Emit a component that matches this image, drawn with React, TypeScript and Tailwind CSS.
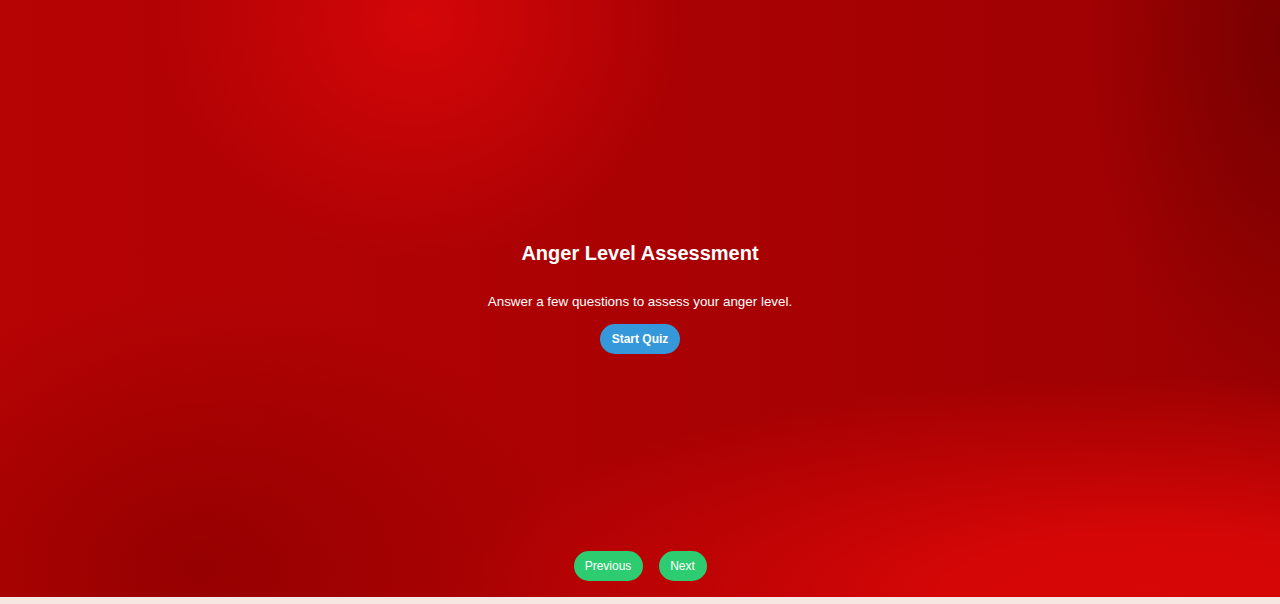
export default function App() {
  return (
    <div className="flex h-[604px] w-[1280px] flex-col overflow-hidden font-['Liberation_Sans',Arial,sans-serif]">
      <div className="relative flex h-[597px] flex-col items-center bg-[#a80204] bg-[radial-gradient(ellipse_260px_240px_at_420px_20px,#d40608_0%,rgba(212,6,8,0)_100%),radial-gradient(ellipse_700px_220px_at_1150px_597px,#d80606_0%,#d40606_30%,rgba(216,6,6,0)_100%),radial-gradient(ellipse_200px_380px_at_1290px_40px,#760000_0%,rgba(118,0,0,0)_100%),radial-gradient(ellipse_380px_280px_at_200px_570px,#960000_0%,rgba(150,0,0,0)_100%),linear-gradient(90deg,#b60304_0%,#ae0204_35%,#a60103_65%,#9c0102_100%)]">
        <div className="mt-[241px] flex flex-col items-center text-white">
          <h1 className="text-[20px] font-bold leading-6">Anger Level Assessment</h1>
          <p className="mt-[27px] text-[13.4px] leading-5">Answer a few questions to assess your anger level.</p>
          <button className="mt-[12px] h-[30px] w-[80px] rounded-full bg-[#3498db] text-[12px] font-bold text-white">
            Start Quiz
          </button>
        </div>
        <div className="mt-auto mb-4 flex gap-4">
          <button className="h-[30px] w-[69px] rounded-full bg-[#2ecc71] text-[12px] text-white">Previous</button>
          <button className="h-[30px] w-[48px] rounded-full bg-[#2ecc71] text-[12px] text-white">Next</button>
        </div>
      </div>
      <div className="h-[7px] bg-[#f6e7e2]" />
    </div>
  )
}
